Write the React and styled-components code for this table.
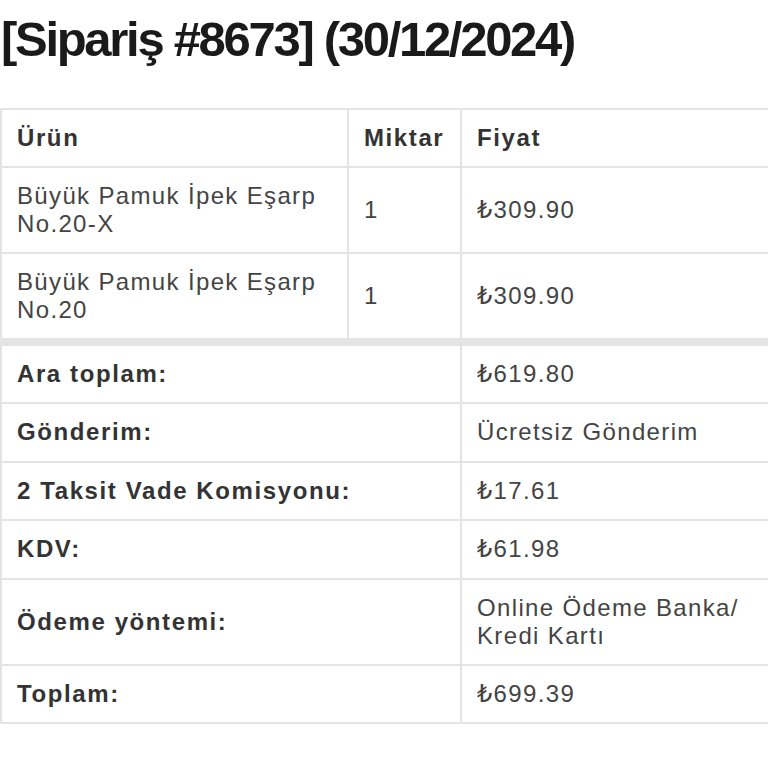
import React from 'react';
import styled, { createGlobalStyle } from 'styled-components';

const GlobalStyle = createGlobalStyle`
  html, body {
    margin: 0;
    padding: 0;
    background: #ffffff;
    overflow: hidden;
  }
  body {
    font-family: "Liberation Sans", Arial, "DejaVu Sans", sans-serif;
  }
`;

const Page = styled.div`
  width: 768px;
  height: 768px;
  overflow: hidden;
  background: #fff;
`;

const Title = styled.h1`
  margin: 9px 0 39px 0;
  padding-left: 1px;
  font-size: 49px;
  line-height: 60px;
  font-weight: 700;
  letter-spacing: -2.3px;
  color: #1a1a1a;
  white-space: nowrap;
`;

const OrderTable = styled.table`
  width: 781px;
  table-layout: fixed;
  border-collapse: collapse;
  font-size: 24px;
`;

const Cell = styled.td`
  border: 2px solid #e4e4e4;
  padding: 14px 15px;
  line-height: 28px;
  text-align: left;
  vertical-align: middle;
  font-weight: ${p => (p.$bold ? 700 : 400)};
  letter-spacing: ${p => (p.$bold ? '1.6px' : '1.35px')};
  color: ${p => (p.$bold ? '#333' : '#444')};
  ${p => p.$first && 'border-top-width: 8px;'}
`;

const HeadCell = styled(Cell).attrs({ as: 'th', $bold: true })``;

const TotalRow = styled.tr`
  height: ${p => (p.$tall ? '86px' : '58.5px')};
`;

const items = [
  { name: 'Büyük Pamuk İpek Eşarp No.20-X', qty: 1, price: '₺309.90' },
  { name: 'Büyük Pamuk İpek Eşarp No.20', qty: 1, price: '₺309.90' },
];

const totals = [
  { label: 'Ara toplam:', value: '₺619.80' },
  { label: 'Gönderim:', value: 'Ücretsiz Gönderim' },
  { label: '2 Taksit Vade Komisyonu:', value: '₺17.61' },
  { label: 'KDV:', value: '₺61.98' },
  { label: 'Ödeme yöntemi:', value: 'Online Ödeme Banka/\u200BKredi Kartı', tall: true },
  { label: 'Toplam:', value: '₺699.39' },
];

export default function App() {
  return (
    <Page>
      <GlobalStyle />
      <Title>[Sipariş #8673] (30/12/2024)</Title>
      <OrderTable>
        <colgroup>
          <col style={{ width: '347px' }} />
          <col style={{ width: '113px' }} />
          <col style={{ width: '321px' }} />
        </colgroup>
        <thead>
          <tr>
            <HeadCell>Ürün</HeadCell>
            <HeadCell>Miktar</HeadCell>
            <HeadCell>Fiyat</HeadCell>
          </tr>
        </thead>
        <tbody>
          {items.map((it, i) => (
            <tr key={i}>
              <Cell>{it.name}</Cell>
              <Cell>{it.qty}</Cell>
              <Cell>{it.price}</Cell>
            </tr>
          ))}
        </tbody>
        <tfoot>
          {totals.map((t, i) => (
            <TotalRow key={t.label} $tall={t.tall}>
              <Cell as="th" colSpan={2} $bold $first={i === 0}>{t.label}</Cell>
              <Cell $first={i === 0}>{t.value}</Cell>
            </TotalRow>
          ))}
        </tfoot>
      </OrderTable>
    </Page>
  );
}
